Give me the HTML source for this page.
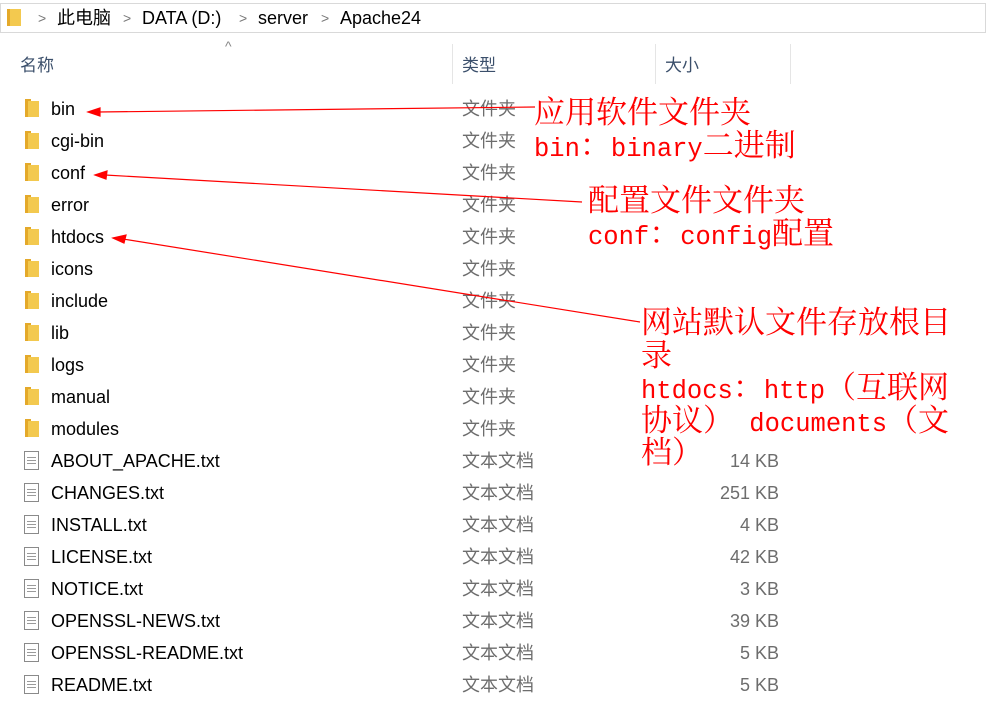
<!DOCTYPE html><html><head><meta charset="utf-8"><style>
body{margin:0;width:986px;height:703px;background:#fff;position:relative;overflow:hidden;font-family:"Liberation Sans","Noto Sans CJK SC",sans-serif;}
.addr{position:absolute;left:0;top:3px;width:984px;height:28px;border:1px solid #d9d9d9;font-size:18px;color:#000}
.a{position:absolute;top:0;line-height:28px}
.chev{position:absolute;top:0;line-height:28px;color:#777;font-size:14px}
.hd{position:absolute;top:51px;font-size:17px;color:#3b4f6b}
.sep{position:absolute;top:44px;width:1px;height:40px;background:#e5e5e5}
.row{position:absolute;left:0;height:32px;width:986px;font-size:18px;line-height:32px}
.row .n{position:absolute;left:51px}
.row .t{position:absolute;left:462px;color:#6d6d6d}
.row .s{position:absolute;right:207px;color:#6d6d6d}
.fold{position:absolute;left:25px;top:8px;width:14px;height:16px;background:#f3c94f;border-left:3px solid #e4a92a;box-sizing:border-box}
.fold:before{content:"";position:absolute;left:-3px;top:-2px;width:6px;height:2px;background:#e4a92a}
.doc{position:absolute;left:24px;top:6px;width:15px;height:19px;border:1px solid #8a8a8a;box-sizing:border-box;background:repeating-linear-gradient(#fff 0 2px,#9a9a9a 2px 3px);background-clip:content-box;padding:3px 2px}
.an{position:absolute;color:#f00;font-family:"Noto Serif CJK SC",serif;font-size:31px;line-height:32.5px;white-space:pre}
.m{font-family:"Liberation Mono",monospace;font-size:25.5px;line-height:0}
</style></head><body>
<div class="addr">
<div style="position:absolute;left:6px;top:5px;width:14px;height:17px;background:#f3c94f;border-left:3px solid #e4a92a;box-sizing:border-box"></div>
<span class="chev" style="left:37px">&gt;</span><span class="a" style="left:56px">此电脑</span>
<span class="chev" style="left:122px">&gt;</span><span class="a" style="left:141px">DATA (D:)</span>
<span class="chev" style="left:238px">&gt;</span><span class="a" style="left:257px">server</span>
<span class="chev" style="left:320px">&gt;</span><span class="a" style="left:339px">Apache24</span>
</div>
<div style="position:absolute;left:225px;top:38px;color:#888;font-size:14px">^</div>
<div class="hd" style="left:20px">名称</div><div class="hd" style="left:462px">类型</div><div class="hd" style="left:665px">大小</div>
<div class="sep" style="left:452px"></div><div class="sep" style="left:655px"></div><div class="sep" style="left:790px"></div>
<div class="row" style="top:93px"><i class="fold"></i><span class="n">bin</span><span class="t">文件夹</span></div>
<div class="row" style="top:125px"><i class="fold"></i><span class="n">cgi-bin</span><span class="t">文件夹</span></div>
<div class="row" style="top:157px"><i class="fold"></i><span class="n">conf</span><span class="t">文件夹</span></div>
<div class="row" style="top:189px"><i class="fold"></i><span class="n">error</span><span class="t">文件夹</span></div>
<div class="row" style="top:221px"><i class="fold"></i><span class="n">htdocs</span><span class="t">文件夹</span></div>
<div class="row" style="top:253px"><i class="fold"></i><span class="n">icons</span><span class="t">文件夹</span></div>
<div class="row" style="top:285px"><i class="fold"></i><span class="n">include</span><span class="t">文件夹</span></div>
<div class="row" style="top:317px"><i class="fold"></i><span class="n">lib</span><span class="t">文件夹</span></div>
<div class="row" style="top:349px"><i class="fold"></i><span class="n">logs</span><span class="t">文件夹</span></div>
<div class="row" style="top:381px"><i class="fold"></i><span class="n">manual</span><span class="t">文件夹</span></div>
<div class="row" style="top:413px"><i class="fold"></i><span class="n">modules</span><span class="t">文件夹</span></div>
<div class="row" style="top:445px"><i class="doc"></i><span class="n">ABOUT_APACHE.txt</span><span class="t">文本文档</span><span class="s">14 KB</span></div>
<div class="row" style="top:477px"><i class="doc"></i><span class="n">CHANGES.txt</span><span class="t">文本文档</span><span class="s">251 KB</span></div>
<div class="row" style="top:509px"><i class="doc"></i><span class="n">INSTALL.txt</span><span class="t">文本文档</span><span class="s">4 KB</span></div>
<div class="row" style="top:541px"><i class="doc"></i><span class="n">LICENSE.txt</span><span class="t">文本文档</span><span class="s">42 KB</span></div>
<div class="row" style="top:573px"><i class="doc"></i><span class="n">NOTICE.txt</span><span class="t">文本文档</span><span class="s">3 KB</span></div>
<div class="row" style="top:605px"><i class="doc"></i><span class="n">OPENSSL-NEWS.txt</span><span class="t">文本文档</span><span class="s">39 KB</span></div>
<div class="row" style="top:637px"><i class="doc"></i><span class="n">OPENSSL-README.txt</span><span class="t">文本文档</span><span class="s">5 KB</span></div>
<div class="row" style="top:669px"><i class="doc"></i><span class="n">README.txt</span><span class="t">文本文档</span><span class="s">5 KB</span></div>
<svg style="position:absolute;left:0;top:0" width="986" height="703">
<g stroke="#f00" stroke-width="1.2" fill="#f00">
<line x1="535" y1="107" x2="98" y2="112"/><polygon points="88,112 100,108 100,116"/>
<line x1="582" y1="202" x2="105" y2="175"/><polygon points="95,175 107,171 106,179"/>
<line x1="640" y1="322" x2="123" y2="239"/><polygon points="113,238 126,235 124,243"/>
</g></svg>
<div class="an" style="left:534px;top:94px">应用软件文件夹
<span class="m" style="font-weight:normal">bin</span>：<span class="m">binary</span>二进制</div>
<div class="an" style="left:588px;top:182px">配置文件文件夹
<span class="m">conf</span>：<span class="m">config</span>配置</div>
<div class="an" style="left:641px;top:304px">网站默认文件存放根目
录
<span class="m">htdocs</span>：<span class="m">http</span>（互联网
协议）<span class="m"> documents</span>（文
档）</div>
</body></html>
